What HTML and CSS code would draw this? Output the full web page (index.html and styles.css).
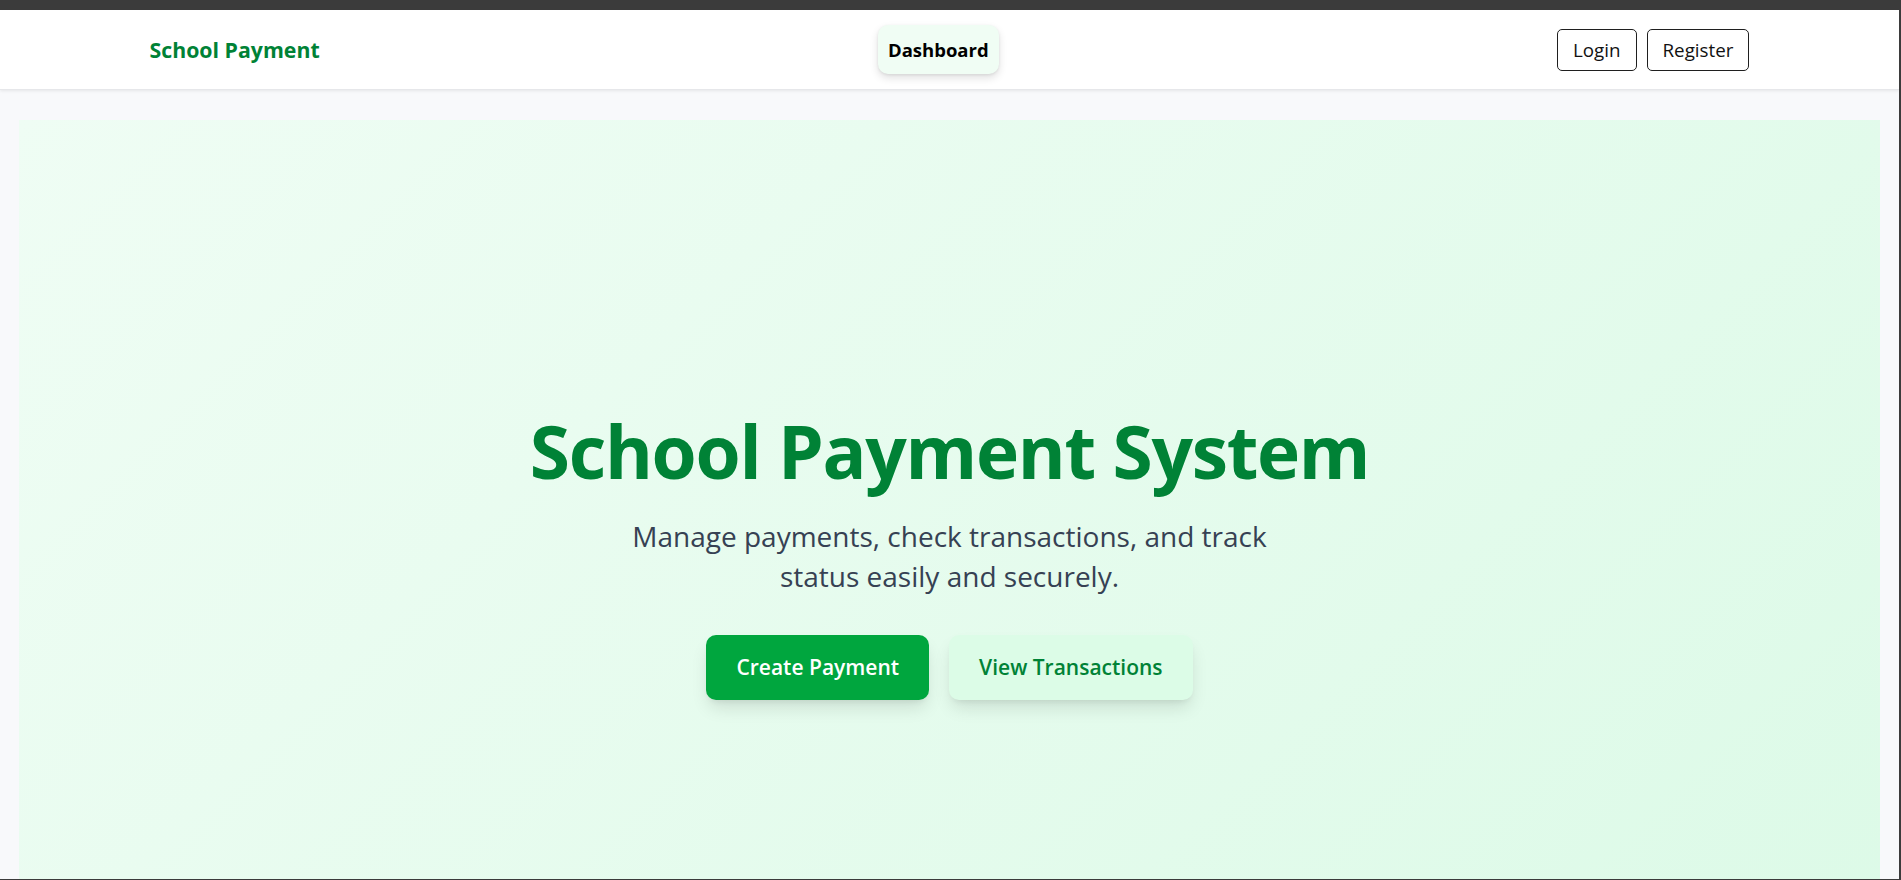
FILE: index.html
```html
<!DOCTYPE html>
<html lang="en">
<head>
<meta charset="utf-8">
<title>School Payment</title>
<link rel="stylesheet" href="styles.css">
</head>
<body>
<div class="window">
  <header class="navbar">
    <div class="nav-inner">
      <a class="brand" href="#">School Payment</a>
      <nav class="nav-links">
        <a class="nav-link active" href="#">Dashboard</a>
      </nav>
      <div class="auth">
        <button class="btn-outline">Login</button>
        <button class="btn-outline">Register</button>
      </div>
    </div>
  </header>
  <main class="main">
    <section class="hero">
      <h1 class="hero-title">School Payment System</h1>
      <p class="hero-sub">Manage payments, check transactions, and track status easily and securely.</p>
      <div class="hero-actions">
        <a class="btn btn-primary" href="#">Create Payment</a>
        <a class="btn btn-secondary" href="#">View Transactions</a>
      </div>
    </section>
  </main>
</div>
</body>
</html>
```

FILE: styles.css
```css
* { box-sizing: border-box; }
html, body { margin: 0; padding: 0; }
body {
  width: 1901px;
  height: 880px;
  overflow: hidden;
  background: #3b3b3b;
  font-family: "Open Sans", "Noto Sans", sans-serif;
  padding-top: 10px;
}
.window {
  width: 1899px;
  height: 869px;
  overflow: hidden;
  background: #f8f9fb;
}
.navbar {
  background: #ffffff;
  height: 80px;
  border-bottom: 1px solid #e6e7ea;
  box-shadow: 0 1px 3px rgba(0,0,0,0.08);
  position: relative;
  z-index: 2;
}
.nav-inner {
  width: 1600px;
  margin: 0 auto;
  height: 79px;
  display: flex;
  align-items: center;
  justify-content: space-between;
}
.brand {
  color: #008236;
  font-weight: 700;
  font-size: 21.3px;
  text-decoration: none;
}
.nav-link {
  display: block;
  color: #000;
  font-weight: 700;
  font-size: 18.5px;
  line-height: 29px;
  padding: 10px;
  border-radius: 10px;
  background: #f0fdf4;
  box-shadow: 0 4px 8px rgba(0,0,0,0.12), 0 1px 3px rgba(0,0,0,0.08);
  text-decoration: none;
}
.auth { display: flex; gap: 10px; }
.btn-outline {
  font-family: inherit;
  font-size: 18.8px;
  line-height: 30px;
  padding: 5px 15px;
  border: 1px solid #1f1f1f;
  border-radius: 5px;
  background: #fff;
  color: #111;
}
.main { padding: 30px 19px 0; }
.hero {
  height: 880px;
  background: linear-gradient(135deg, #effdf4 0%, #dcfae7 100%);
  display: flex;
  flex-direction: column;
  align-items: center;
  justify-content: center;
  text-align: center;
  padding-bottom: 8px;
}
.hero-title {
  margin: 0 0 28px;
  font-size: 73px;
  letter-spacing: -1.3px;
  line-height: 75px;
  font-weight: 700;
  color: #008236;
}
.hero-sub {
  margin: 0 0 39px;
  max-width: 680px;
  font-size: 28px;
  line-height: 40px;
  color: #364153;
}
.hero-actions { display: flex; gap: 20px; }
.btn {
  display: block;
  font-size: 21px;
  font-weight: 600;
  line-height: 35px;
  padding: 15px 30px;
  border-radius: 10px;
  text-decoration: none;
  box-shadow: 0 10px 18px -3px rgba(0,0,0,0.12), 0 4px 7px -4px rgba(0,0,0,0.1);
}
.btn-primary { background: #00a63e; color: #fff; }
.btn-secondary { background: #dcfce7; color: #008236; }
```
